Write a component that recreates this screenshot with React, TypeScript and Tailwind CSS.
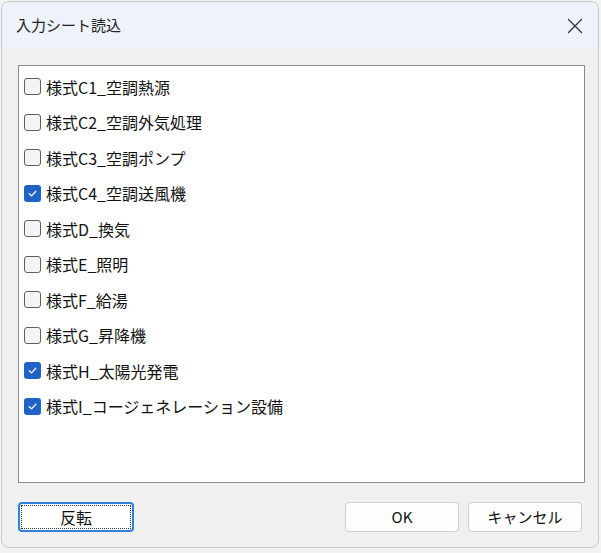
import { useState } from 'react';

const SHEETS = [
  { name: '様式C1_空調熱源', checked: false },
  { name: '様式C2_空調外気処理', checked: false },
  { name: '様式C3_空調ポンプ', checked: false },
  { name: '様式C4_空調送風機', checked: true },
  { name: '様式D_換気', checked: false },
  { name: '様式E_照明', checked: false },
  { name: '様式F_給湯', checked: false },
  { name: '様式G_昇降機', checked: false },
  { name: '様式H_太陽光発電', checked: true },
  { name: '様式I_コージェネレーション設備', checked: true },
];

const font = { fontFamily: '"Noto Sans CJK JP", "Noto Sans", sans-serif' };

function CheckBox({ checked }: { checked: boolean }) {
  if (checked) {
    return (
      <span className="flex h-[17px] w-[17px] shrink-0 items-center justify-center rounded-[3px] bg-[#1f63c6]">
        <svg width="11" height="11" viewBox="0 0 12 12" fill="none">
          <path d="M2.5 6.3 5 8.6 9.6 3.6" stroke="white" strokeWidth="1.4" strokeLinecap="round" strokeLinejoin="round" />
        </svg>
      </span>
    );
  }
  return <span className="h-[17px] w-[17px] shrink-0 rounded-[3px] border border-[#5f5f5f] bg-[#f4f4f4]" />;
}

export default function App() {
  const [items, setItems] = useState(SHEETS);

  const toggle = (i: number) =>
    setItems((prev) => prev.map((it, j) => (j === i ? { ...it, checked: !it.checked } : it)));

  const invert = () => setItems((prev) => prev.map((it) => ({ ...it, checked: !it.checked })));

  return (
    <div className="h-[553px] w-[601px] bg-[#f3f3f3] p-[1px] pr-[2px] pb-[5px]" style={font}>
      <div className="flex h-full w-full flex-col overflow-hidden rounded-[8px] border border-[#c9c9c9] bg-[#f0f0f0]">
        {/* title bar */}
        <div className="flex h-[46px] shrink-0 items-center justify-between bg-[#eef2fa] pl-[14px] pr-[15px]">
          <span className="text-[15px] text-[#222]">入力シート読込</span>
          <svg width="16" height="16" viewBox="0 0 16 16" className="mt-[2px]">
            <path d="M1.5 1.5 14.5 14.5M14.5 1.5 1.5 14.5" stroke="#333" strokeWidth="1.3" strokeLinecap="round" />
          </svg>
        </div>

        <div className="flex flex-1 flex-col pl-[16px] pr-[13px] pt-[17px]">
          {/* list */}
          <div className="h-[418px] border border-[#8c8c8c] bg-white pt-[3px] pl-[5px]">
            {items.map((it, i) => (
              <div
                key={it.name}
                className="flex h-[35.5px] cursor-default items-center gap-[5px]"
                onClick={() => toggle(i)}
              >
                <CheckBox checked={it.checked} />
                <span className="text-[16px] leading-none text-[#111]">{it.name}</span>
              </div>
            ))}
          </div>

          {/* buttons */}
          <div className="mt-[19px] flex items-center">
            <button
              onClick={invert}
              className="flex h-[30px] w-[116px] items-center justify-center rounded-[4px] border-2 border-[#2f7fdc] bg-white p-[1px]"
            >
              <span className="flex h-full w-full items-center justify-center border border-dotted border-[#333] text-[16px] text-[#111]">
                反転
              </span>
            </button>
            <div className="flex-1" />
            <button className="h-[30px] w-[114px] rounded-[4px] border border-[#d0d0d0] bg-[#fdfdfd] text-[15px] text-[#111]">
              OK
            </button>
            <button className="ml-[9px] h-[30px] w-[114px] rounded-[4px] border border-[#d0d0d0] bg-[#fdfdfd] text-[15px] text-[#111]">
              キャンセル
            </button>
            <div className="w-[3px]" />
          </div>
        </div>
      </div>
    </div>
  );
}
